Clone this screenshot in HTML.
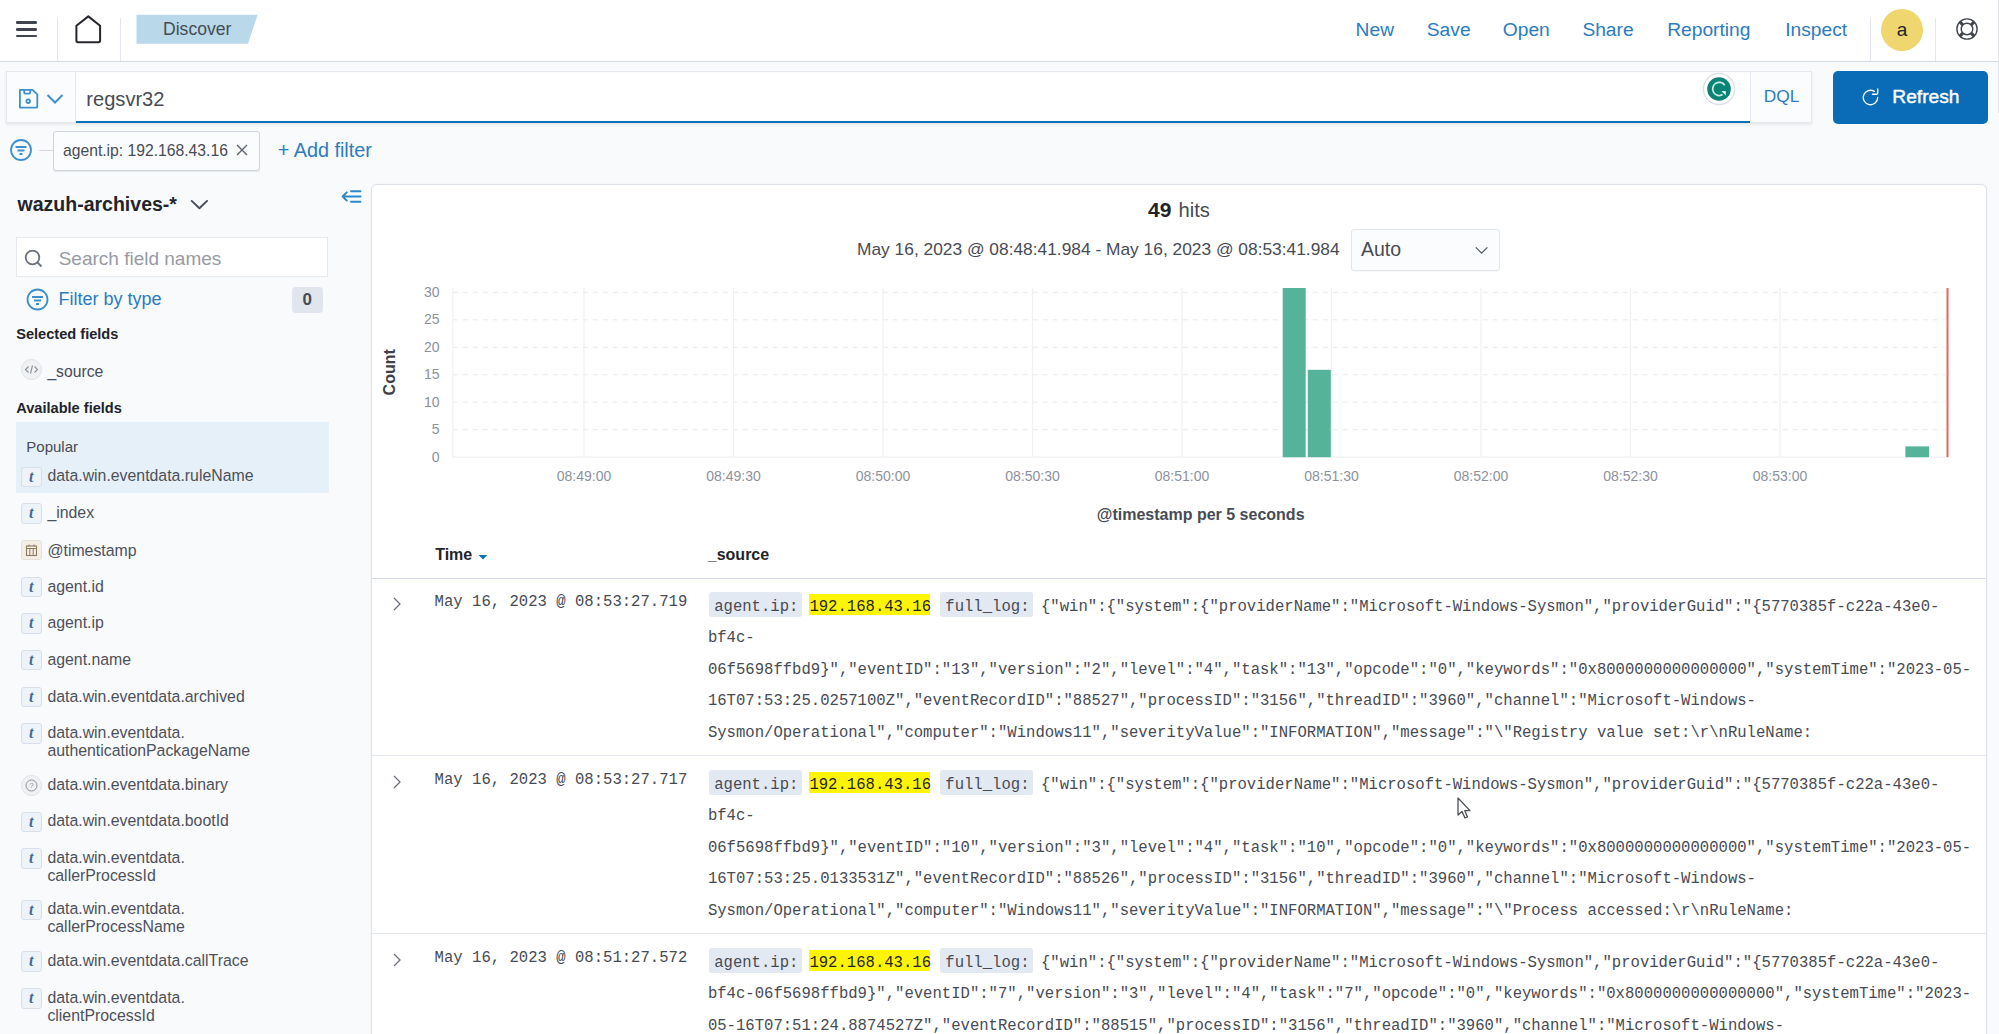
<!DOCTYPE html>
<html><head><meta charset="utf-8"><title>Discover</title>
<style>
html,body{margin:0;padding:0;}
body{width:1999px;height:1034px;overflow:hidden;position:relative;background:#f9fafc;font-family:"Liberation Sans",sans-serif;}
.r{position:absolute;}
.t{position:absolute;line-height:1;white-space:nowrap;}
.s{font-family:"Liberation Sans",sans-serif;}
.m{font-family:"Liberation Mono",monospace;}
.ti{width:20.5px;height:20.5px;border-radius:3px;background:#eef3f9;border:1px solid #d6dfea;box-sizing:border-box;text-align:center;}
.ti span{display:block;font-family:"Liberation Serif",serif;font-style:italic;font-weight:700;font-size:16px;line-height:18.5px;color:#48698f;}
</style></head><body>
<div class="r" style="left:0.0px;top:0.0px;width:1999.0px;height:61.0px;background:#fff"></div>
<div class="r" style="left:0.0px;top:61.0px;width:1999.0px;height:1.0px;background:#d3dae6"></div>
<div class="r" style="left:16.0px;top:21.3px;width:20.8px;height:2.7px;background:#40444d;border-radius:1.3px"></div>
<div class="r" style="left:16.0px;top:27.9px;width:20.8px;height:2.7px;background:#40444d;border-radius:1.3px"></div>
<div class="r" style="left:16.0px;top:34.5px;width:20.8px;height:2.7px;background:#40444d;border-radius:1.3px"></div>
<div class="r" style="left:57.0px;top:18.0px;width:1.0px;height:43.0px;background:#e3e8f0"></div>
<div class="r" style="left:120.0px;top:18.0px;width:1.0px;height:43.0px;background:#e3e8f0"></div>
<svg class="r" style="left:74px;top:14px" width="29" height="31" viewBox="0 0 29 31"><path d="M2.4 11.8 L14.3 2.4 L26.1 11.8 V26.6 Q26.1 28.2 24.5 28.2 H4 Q2.4 28.2 2.4 26.6 Z" fill="none" stroke="#25272c" stroke-width="2" stroke-linejoin="round"/></svg>
<svg class="r" style="left:136px;top:14px" width="124" height="31"><polygon points="0.5,0.7 121.7,0.7 112,29.7 0.5,29.7" fill="#b9d9eb"/></svg>
<div class="t s" style="left:163.0px;top:21.1px;font-size:17.6px;color:#474b54;">Discover</div>
<div class="t s" style="left:1374.8px;top:19.8px;font-size:19.2px;color:#2b7cc1;transform:translateX(-50%);">New</div>
<div class="t s" style="left:1448.7px;top:19.8px;font-size:19.2px;color:#2b7cc1;transform:translateX(-50%);">Save</div>
<div class="t s" style="left:1526.3px;top:19.8px;font-size:19.2px;color:#2b7cc1;transform:translateX(-50%);">Open</div>
<div class="t s" style="left:1608.0px;top:19.8px;font-size:19.2px;color:#2b7cc1;transform:translateX(-50%);">Share</div>
<div class="t s" style="left:1708.8px;top:19.8px;font-size:19.2px;color:#2b7cc1;transform:translateX(-50%);">Reporting</div>
<div class="t s" style="left:1816.2px;top:19.8px;font-size:19.2px;color:#2b7cc1;transform:translateX(-50%);">Inspect</div>
<div class="r" style="left:1870.0px;top:18.0px;width:1.0px;height:43.0px;background:#e3e8f0"></div>
<div class="r" style="left:1935.0px;top:18.0px;width:1.0px;height:43.0px;background:#e3e8f0"></div>
<div class="r" style="left:1881.2px;top:8.5px;width:42px;height:42px;border-radius:50%;background:#f0d66e"></div>
<div class="t s" style="left:1896.8px;top:20.2px;font-size:19px;color:#22242a;">a</div>
<svg class="r" style="left:1954.7px;top:17.3px" width="24" height="24" viewBox="0 0 24 24"><circle cx="12" cy="12" r="10.1" fill="none" stroke="#40444d" stroke-width="1.4"/><circle cx="12" cy="12" r="5.8" fill="none" stroke="#40444d" stroke-width="1.4"/><path d="M7.8 7.8 L4.9 4.9 M16.2 7.8 L19.1 4.9 M7.8 16.2 L4.9 19.1 M16.2 16.2 L19.1 19.1" stroke="#40444d" stroke-width="3.2"/></svg>
<div class="r" style="left:5.5px;top:71.3px;width:1806px;height:52px;background:#fbfcfd;border:1px solid #e3e7ee;box-sizing:border-box;box-shadow:0 2px 3px rgba(0,0,0,0.07)"></div>
<div class="r" style="left:75.5px;top:72.5px;width:1674.5px;height:50.8px;background:#fff"></div>
<div class="r" style="left:75.5px;top:120.6px;width:1674.5px;height:2.8px;background:#0b6fba"></div>
<div class="r" style="left:1750.0px;top:71.5px;width:1.0px;height:51.5px;background:#e3e8f0"></div>
<div class="r" style="left:75.0px;top:71.5px;width:1.0px;height:51.5px;background:#e3e8f0"></div>
<svg class="r" style="left:17px;top:87px" width="24" height="24" viewBox="0 0 24 24"><path d="M3 2.9 H15.5 L20.3 7.3 V19.7 Q20.3 20.7 19.3 20.7 H3 Q2.9 20.7 2.9 19.7 V3.9 Q2.9 2.9 3.9 2.9 Z" fill="none" stroke="#3f8fcf" stroke-width="1.8" stroke-linejoin="round"/><path d="M7.2 2.9 V5.6 Q7.2 6.6 8.2 6.6 H12.2 Q13.2 6.6 13.2 5.6 V2.9" fill="none" stroke="#3f8fcf" stroke-width="1.8"/><circle cx="11.2" cy="14.2" r="1.8" fill="none" stroke="#3f8fcf" stroke-width="1.8"/></svg>
<svg class="r" style="left:46px;top:93px" width="18" height="12" viewBox="0 0 18 12"><path d="M1.5 2 L9 9.5 L16.5 2" fill="none" stroke="#3d8fd1" stroke-width="2"/></svg>
<div class="t s" style="left:86.3px;top:89.4px;font-size:20.1px;color:#474b54;">regsvr32</div>
<svg class="r" style="left:1701px;top:70.5px" width="36" height="36" viewBox="0 0 36 36"><circle cx="18" cy="18" r="15.6" fill="#fff" stroke="#dcdfe6" stroke-width="1.4"/><circle cx="18" cy="18" r="11.8" fill="#0a8474"/><path d="M23.7 14.2 A6.6 6.6 0 1 0 21.6 23.6" fill="none" stroke="#cdece5" stroke-width="1.7"/><path d="M20.3 19.9 H24.8 V24.4 Z" fill="#dff3ee"/></svg>
<div class="t s" style="left:1763.8px;top:88.3px;font-size:17.3px;color:#2b7cc1;">DQL</div>
<div class="r" style="left:1833px;top:71px;width:154.5px;height:52.6px;border-radius:5px;background:#0a6cb6"></div>
<svg class="r" style="left:1860.2px;top:87.2px" width="21" height="21" viewBox="0 0 16 16"><path fill="#fff" d="M11.228 2.942a.5.5 0 1 1-.538.842A5 5 0 1 0 13 8a.5.5 0 1 1 1 0 6 6 0 1 1-2.772-5.058zM14 1.5v3A1.5 1.5 0 0 1 12.5 6h-3a.5.5 0 0 1 0-1h3a.5.5 0 0 0 .5-.5v-3a.5.5 0 1 1 1 0z"/></svg>
<div class="t s" style="left:1892.3px;top:87.4px;font-size:19.2px;color:#fff;-webkit-text-stroke:0.45px #fff;">Refresh</div>
<svg class="r" style="left:9px;top:138px" width="24" height="24" viewBox="0 0 24 24"><circle cx="12" cy="12" r="10" fill="none" stroke="#3d8fd1" stroke-width="1.8"/><path d="M6.5 9 H17.5 M8.5 12.5 H15.5 M10.5 16 H13.5" stroke="#3d8fd1" stroke-width="1.8"/></svg>
<div class="r" style="left:39.0px;top:149.5px;width:14.0px;height:1.0px;background:#d3dae6"></div>
<div class="r" style="left:53px;top:131.2px;width:207px;height:39.5px;border:1px solid #cfd5de;border-radius:3px;background:#fbfcfd;box-sizing:border-box;box-shadow:0 1px 1px rgba(0,0,0,0.08)"></div>
<div class="t s" style="left:63.0px;top:143.3px;font-size:15.7px;color:#474b54;">agent.ip: 192.168.43.16</div>
<svg class="r" style="left:234px;top:142px" width="16" height="16" viewBox="0 0 16 16"><path d="M3 3 L13 13 M13 3 L3 13" stroke="#5d636d" stroke-width="1.4"/></svg>
<div class="t s" style="left:277.8px;top:140.7px;font-size:19.8px;color:#2b7cc1;">+ Add filter</div>
<div class="t s" style="left:17.6px;top:194.5px;font-size:19.5px;color:#22242a;font-weight:700;">wazuh-archives-*</div>
<svg class="r" style="left:190px;top:196px" width="19" height="14" viewBox="0 0 19 14"><path d="M1.7 4.9 L9.4 12.2 L17.1 4.9" fill="none" stroke="#474b54" stroke-width="1.9" stroke-linecap="round" stroke-linejoin="round"/></svg>
<svg class="r" style="left:340px;top:187px" width="23" height="19" viewBox="0 0 23 19"><path d="M6.8 5.3 L2.6 9.5 L6.8 13.7 M2.6 9.5 H20.5 M11 4.2 H20.5 M11 14.7 H20.5" fill="none" stroke="#2f86c9" stroke-width="1.9" stroke-linecap="round" stroke-linejoin="round"/></svg>
<div class="r" style="left:16px;top:237px;width:312px;height:40px;border:1px solid #e6e9f0;background:#fff;box-sizing:border-box"></div>
<svg class="r" style="left:23px;top:248px" width="22" height="22" viewBox="0 0 22 22"><circle cx="9.5" cy="9.5" r="6.8" fill="none" stroke="#69707d" stroke-width="1.8"/><path d="M14.5 14.5 L18.5 18.5" stroke="#69707d" stroke-width="1.8"/></svg>
<div class="t s" style="left:58.7px;top:248.7px;font-size:19px;color:#969ba4;">Search field names</div>
<svg class="r" style="left:24.5px;top:286.5px" width="25" height="25" viewBox="0 0 25 25"><circle cx="12.5" cy="12.5" r="10" fill="none" stroke="#3d8fd1" stroke-width="1.8"/><path d="M7 10 H18 M9 13.5 H16 M11 17 H14" stroke="#3d8fd1" stroke-width="1.8"/></svg>
<div class="t s" style="left:58.5px;top:290.3px;font-size:18.0px;color:#2b7cc1;">Filter by type</div>
<div class="r" style="left:292px;top:287px;width:31px;height:26px;border-radius:4px;background:#e0e5ee"></div>
<div class="t s" style="left:302.5px;top:291.1px;font-size:17px;color:#474b54;font-weight:700;">0</div>
<div class="t s" style="left:16.2px;top:327.2px;font-size:14.6px;color:#22242a;font-weight:700;">Selected fields</div>
<div class="r" style="left:21px;top:358.5px;width:21px;height:21px;border-radius:50%;background:#f0f1f3;border:1px solid #dfe2e6;box-sizing:border-box"></div>
<svg class="r" style="left:21px;top:358.5px" width="21" height="21" viewBox="0 0 21 21"><path d="M7.5 7.5 L4.5 10.5 L7.5 13.5 M13.5 7.5 L16.5 10.5 L13.5 13.5 M11.5 6.5 L9.5 14.5" fill="none" stroke="#8a919c" stroke-width="1.1"/></svg>
<div class="t s" style="left:47.4px;top:363.5px;font-size:15.7px;color:#474b54;">_source</div>
<div class="t s" style="left:16.2px;top:400.8px;font-size:14.6px;color:#22242a;font-weight:700;">Available fields</div>
<div class="r" style="left:15.7px;top:422.0px;width:313.0px;height:70.6px;background:#e6f0f8"></div>
<div class="t s" style="left:26.3px;top:439.3px;font-size:15px;color:#474b54;">Popular</div>
<div class="r ti" style="left:21px;top:466.6px"><span>t</span></div>
<div class="t s" style="left:47.4px;top:467.9px;font-size:15.85px;color:#4d515a;">data.win.eventdata.ruleName</div>
<div class="r ti" style="left:21px;top:503.2px"><span>t</span></div>
<div class="t s" style="left:47.4px;top:505.3px;font-size:15.85px;color:#4d515a;">_index</div>
<div class="r" style="left:21px;top:539.8px;width:20.5px;height:20.5px;border-radius:3px;background:#f4efe6;border:1px solid #e8e0d0;box-sizing:border-box"></div>
<svg class="r" style="left:21px;top:539.8px" width="21" height="21" viewBox="0 0 21 21"><rect x="5.5" y="6" width="10" height="9.5" fill="none" stroke="#8c7b5e" stroke-width="1.1"/><path d="M5.5 8.5 H15.5 M8.8 8.5 V15.5 M12.2 8.5 V15.5 M8 4.5 V6.5 M13 4.5 V6.5" stroke="#8c7b5e" stroke-width="1"/></svg>
<div class="t s" style="left:47.4px;top:542.5px;font-size:15.85px;color:#4d515a;">@timestamp</div>
<div class="r ti" style="left:21px;top:576.5px"><span>t</span></div>
<div class="t s" style="left:47.4px;top:578.9px;font-size:15.85px;color:#4d515a;">agent.id</div>
<div class="r ti" style="left:21px;top:613.1px"><span>t</span></div>
<div class="t s" style="left:47.4px;top:615.4px;font-size:15.85px;color:#4d515a;">agent.ip</div>
<div class="r ti" style="left:21px;top:649.8px"><span>t</span></div>
<div class="t s" style="left:47.4px;top:652.2px;font-size:15.85px;color:#4d515a;">agent.name</div>
<div class="r ti" style="left:21px;top:686.8px"><span>t</span></div>
<div class="t s" style="left:47.4px;top:688.9px;font-size:15.85px;color:#4d515a;">data.win.eventdata.archived</div>
<div class="r ti" style="left:21px;top:723.4px"><span>t</span></div>
<div class="t s" style="left:47.4px;top:725.4px;font-size:15.85px;color:#4d515a;">data.win.eventdata.</div>
<div class="t s" style="left:47.4px;top:743.0px;font-size:15.85px;color:#4d515a;">authenticationPackageName</div>
<div class="r" style="left:21px;top:774.7px;width:21px;height:21px;border-radius:50%;background:#f0f1f3;border:1px solid #dfe2e6;box-sizing:border-box"></div>
<svg class="r" style="left:21px;top:774.7px" width="21" height="21" viewBox="0 0 21 21"><circle cx="10.5" cy="10.5" r="5.5" fill="none" stroke="#8a919c" stroke-width="1"/><text x="10.5" y="13.3" font-size="8" text-anchor="middle" fill="#8a919c" font-family="Liberation Sans">?</text></svg>
<div class="t s" style="left:47.4px;top:776.6px;font-size:15.85px;color:#4d515a;">data.win.eventdata.binary</div>
<div class="r ti" style="left:21px;top:811.6px"><span>t</span></div>
<div class="t s" style="left:47.4px;top:813.2px;font-size:15.85px;color:#4d515a;">data.win.eventdata.bootId</div>
<div class="r ti" style="left:21px;top:848.4px"><span>t</span></div>
<div class="t s" style="left:47.4px;top:850.3px;font-size:15.85px;color:#4d515a;">data.win.eventdata.</div>
<div class="t s" style="left:47.4px;top:867.9px;font-size:15.85px;color:#4d515a;">callerProcessId</div>
<div class="r ti" style="left:21px;top:899.8px"><span>t</span></div>
<div class="t s" style="left:47.4px;top:901.4px;font-size:15.85px;color:#4d515a;">data.win.eventdata.</div>
<div class="t s" style="left:47.4px;top:919.0px;font-size:15.85px;color:#4d515a;">callerProcessName</div>
<div class="r ti" style="left:21px;top:951.2px"><span>t</span></div>
<div class="t s" style="left:47.4px;top:953.1px;font-size:15.85px;color:#4d515a;">data.win.eventdata.callTrace</div>
<div class="r ti" style="left:21px;top:988.3px"><span>t</span></div>
<div class="t s" style="left:47.4px;top:989.9px;font-size:15.85px;color:#4d515a;">data.win.eventdata.</div>
<div class="t s" style="left:47.4px;top:1007.5px;font-size:15.85px;color:#4d515a;">clientProcessId</div>
<div class="r" style="left:371px;top:184px;width:1616px;height:900px;background:#fff;border:1px solid #dde2ea;border-radius:6px;box-sizing:border-box;box-shadow:0 0 2px rgba(0,0,0,0.06)"></div>
<div class="t s" style="left:1148.0px;top:199.0px;font-size:21px;color:#22242a;font-weight:700;">49</div>
<div class="t s" style="left:1178.5px;top:199.7px;font-size:20.2px;color:#474b54;">hits</div>
<div class="t s" style="left:857.0px;top:240.8px;font-size:17.35px;color:#474b54;">May 16, 2023 @ 08:48:41.984 - May 16, 2023 @ 08:53:41.984</div>
<div class="r" style="left:1350.5px;top:229px;width:149.5px;height:41.5px;background:#fbfcfd;border:1px solid #e1e5ee;border-radius:3px;box-sizing:border-box;box-shadow:0 1px 1px rgba(0,0,0,0.03)"></div>
<div class="t s" style="left:1361.0px;top:240.1px;font-size:19.5px;color:#474b54;">Auto</div>
<svg class="r" style="left:1472px;top:243px" width="19" height="14" viewBox="0 0 19 14"><path d="M3.8 4.4 L9.6 10.2 L15.4 4.4" fill="none" stroke="#555b66" stroke-width="1.3"/></svg>
<svg class="r" style="left:0;top:0" width="1999" height="1034"><line x1="452.8" y1="429.7" x2="1945" y2="429.7" stroke="#e6e9ee" stroke-width="1" stroke-dasharray="5 5"/><line x1="452.8" y1="402.2" x2="1945" y2="402.2" stroke="#e6e9ee" stroke-width="1" stroke-dasharray="5 5"/><line x1="452.8" y1="374.8" x2="1945" y2="374.8" stroke="#e6e9ee" stroke-width="1" stroke-dasharray="5 5"/><line x1="452.8" y1="347.3" x2="1945" y2="347.3" stroke="#e6e9ee" stroke-width="1" stroke-dasharray="5 5"/><line x1="452.8" y1="319.8" x2="1945" y2="319.8" stroke="#e6e9ee" stroke-width="1" stroke-dasharray="5 5"/><line x1="452.8" y1="292.3" x2="1945" y2="292.3" stroke="#e6e9ee" stroke-width="1" stroke-dasharray="5 5"/><line x1="584.0" y1="288" x2="584.0" y2="457.2" stroke="#eef0f3" stroke-width="1.2"/><line x1="733.5" y1="288" x2="733.5" y2="457.2" stroke="#eef0f3" stroke-width="1.2"/><line x1="883.0" y1="288" x2="883.0" y2="457.2" stroke="#eef0f3" stroke-width="1.2"/><line x1="1032.5" y1="288" x2="1032.5" y2="457.2" stroke="#eef0f3" stroke-width="1.2"/><line x1="1182.0" y1="288" x2="1182.0" y2="457.2" stroke="#eef0f3" stroke-width="1.2"/><line x1="1331.5" y1="288" x2="1331.5" y2="457.2" stroke="#eef0f3" stroke-width="1.2"/><line x1="1481.0" y1="288" x2="1481.0" y2="457.2" stroke="#eef0f3" stroke-width="1.2"/><line x1="1630.5" y1="288" x2="1630.5" y2="457.2" stroke="#eef0f3" stroke-width="1.2"/><line x1="1780.0" y1="288" x2="1780.0" y2="457.2" stroke="#eef0f3" stroke-width="1.2"/><line x1="452.8" y1="288" x2="452.8" y2="457.2" stroke="#eef0f3" stroke-width="1.2"/><line x1="452.8" y1="457.2" x2="1947" y2="457.2" stroke="#eef0f3" stroke-width="1.2"/><rect x="1282.7" y="288.0" width="23.0" height="169.2" fill="#54b399"/><rect x="1307.8" y="369.8" width="23.0" height="87.4" fill="#54b399"/><rect x="1905.4" y="446.4" width="23.6" height="10.8" fill="#54b399"/><line x1="1947.5" y1="288" x2="1947.5" y2="457.2" stroke="#dc6a5e" stroke-width="2"/><text x="439.6" y="461.8" text-anchor="end" font-size="14" fill="#8c929c" font-family="Liberation Sans">0</text><text x="439.6" y="434.3" text-anchor="end" font-size="14" fill="#8c929c" font-family="Liberation Sans">5</text><text x="439.6" y="406.8" text-anchor="end" font-size="14" fill="#8c929c" font-family="Liberation Sans">10</text><text x="439.6" y="379.4" text-anchor="end" font-size="14" fill="#8c929c" font-family="Liberation Sans">15</text><text x="439.6" y="351.9" text-anchor="end" font-size="14" fill="#8c929c" font-family="Liberation Sans">20</text><text x="439.6" y="324.4" text-anchor="end" font-size="14" fill="#8c929c" font-family="Liberation Sans">25</text><text x="439.6" y="296.9" text-anchor="end" font-size="14" fill="#8c929c" font-family="Liberation Sans">30</text><text x="584.0" y="481" text-anchor="middle" font-size="14" fill="#8c929c" font-family="Liberation Sans">08:49:00</text><text x="733.5" y="481" text-anchor="middle" font-size="14" fill="#8c929c" font-family="Liberation Sans">08:49:30</text><text x="883.0" y="481" text-anchor="middle" font-size="14" fill="#8c929c" font-family="Liberation Sans">08:50:00</text><text x="1032.5" y="481" text-anchor="middle" font-size="14" fill="#8c929c" font-family="Liberation Sans">08:50:30</text><text x="1182.0" y="481" text-anchor="middle" font-size="14" fill="#8c929c" font-family="Liberation Sans">08:51:00</text><text x="1331.5" y="481" text-anchor="middle" font-size="14" fill="#8c929c" font-family="Liberation Sans">08:51:30</text><text x="1481.0" y="481" text-anchor="middle" font-size="14" fill="#8c929c" font-family="Liberation Sans">08:52:00</text><text x="1630.5" y="481" text-anchor="middle" font-size="14" fill="#8c929c" font-family="Liberation Sans">08:52:30</text><text x="1780.0" y="481" text-anchor="middle" font-size="14" fill="#8c929c" font-family="Liberation Sans">08:53:00</text><text transform="translate(394.6 372.3) rotate(-90)" text-anchor="middle" font-size="16" font-weight="700" fill="#3d4149" font-family="Liberation Sans">Count</text><text x="1200.7" y="519.8" text-anchor="middle" font-size="16" font-weight="700" fill="#474b54" font-family="Liberation Sans">@timestamp per 5 seconds</text></svg>
<div class="t s" style="left:435.2px;top:546.5px;font-size:16px;color:#22242a;font-weight:700;">Time</div>
<svg class="r" style="left:477px;top:552px" width="12" height="10" viewBox="0 0 12 10"><path d="M1.6 3 H10.4 L6 7.4 Z" fill="#0b6fba"/></svg>
<div class="t s" style="left:707.8px;top:546.5px;font-size:16px;color:#22242a;font-weight:700;">_source</div>
<div class="r" style="left:372.0px;top:577.5px;width:1614.0px;height:1.0px;background:#d3dae6"></div>
<svg class="r" style="left:390px;top:595px" width="14" height="18" viewBox="0 0 14 18"><path d="M4 3 L10 9 L4 15" fill="none" stroke="#6a707b" stroke-width="1.3"/></svg>
<div class="t m" style="left:434.6px;top:594.6px;font-size:15.6px;color:#474b54;white-space:pre;">May 16, 2023 @ 08:53:27.719</div>
<div class="r" style="left:708.9px;top:591.6px;width:93.5px;height:25.2px;background:#e3e9f2;border-radius:3px"></div>
<div class="t m" style="left:714.2px;top:599.7px;font-size:15.6px;color:#474b54;white-space:pre;">agent.ip:</div>
<div class="r" style="left:808.5px;top:594.2px;width:121.5px;height:21.2px;background:#fff500"></div>
<div class="t m" style="left:809.4px;top:599.7px;font-size:15.6px;color:#22242a;white-space:pre;">192.168.43.16</div>
<div class="r" style="left:939.8px;top:591.6px;width:93.7px;height:25.2px;background:#e3e9f2;border-radius:3px"></div>
<div class="t m" style="left:945.3px;top:599.7px;font-size:15.6px;color:#474b54;white-space:pre;">full_log:</div>
<div class="t m" style="left:1041.0px;top:599.7px;font-size:15.6px;color:#474b54;white-space:pre;">{"win":{"system":{"providerName":"Microsoft-Windows-Sysmon","providerGuid":"{5770385f-c22a-43e0-</div>
<div class="t m" style="left:707.9px;top:631.4px;font-size:15.6px;color:#474b54;white-space:pre;">bf4c-</div>
<div class="t m" style="left:707.9px;top:662.9px;font-size:15.6px;color:#474b54;white-space:pre;">06f5698ffbd9}","eventID":"13","version":"2","level":"4","task":"13","opcode":"0","keywords":"0x8000000000000000","systemTime":"2023-05-</div>
<div class="t m" style="left:707.9px;top:694.3px;font-size:15.6px;color:#474b54;white-space:pre;">16T07:53:25.0257100Z","eventRecordID":"88527","processID":"3156","threadID":"3960","channel":"Microsoft-Windows-</div>
<div class="t m" style="left:707.9px;top:725.8px;font-size:15.6px;color:#474b54;white-space:pre;">Sysmon/Operational","computer":"Windows11","severityValue":"INFORMATION","message":"\"Registry value set:\r\nRuleName:</div>
<div class="r" style="left:372.0px;top:755.0px;width:1614.0px;height:1.0px;background:#e3e8f0"></div>
<svg class="r" style="left:390px;top:773px" width="14" height="18" viewBox="0 0 14 18"><path d="M4 3 L10 9 L4 15" fill="none" stroke="#6a707b" stroke-width="1.3"/></svg>
<div class="t m" style="left:434.6px;top:772.6px;font-size:15.6px;color:#474b54;white-space:pre;">May 16, 2023 @ 08:53:27.717</div>
<div class="r" style="left:708.9px;top:769.6px;width:93.5px;height:25.2px;background:#e3e9f2;border-radius:3px"></div>
<div class="t m" style="left:714.2px;top:777.7px;font-size:15.6px;color:#474b54;white-space:pre;">agent.ip:</div>
<div class="r" style="left:808.5px;top:772.2px;width:121.5px;height:21.2px;background:#fff500"></div>
<div class="t m" style="left:809.4px;top:777.7px;font-size:15.6px;color:#22242a;white-space:pre;">192.168.43.16</div>
<div class="r" style="left:939.8px;top:769.6px;width:93.7px;height:25.2px;background:#e3e9f2;border-radius:3px"></div>
<div class="t m" style="left:945.3px;top:777.7px;font-size:15.6px;color:#474b54;white-space:pre;">full_log:</div>
<div class="t m" style="left:1041.0px;top:777.7px;font-size:15.6px;color:#474b54;white-space:pre;">{"win":{"system":{"providerName":"Microsoft-Windows-Sysmon","providerGuid":"{5770385f-c22a-43e0-</div>
<div class="t m" style="left:707.9px;top:809.4px;font-size:15.6px;color:#474b54;white-space:pre;">bf4c-</div>
<div class="t m" style="left:707.9px;top:840.9px;font-size:15.6px;color:#474b54;white-space:pre;">06f5698ffbd9}","eventID":"10","version":"3","level":"4","task":"10","opcode":"0","keywords":"0x8000000000000000","systemTime":"2023-05-</div>
<div class="t m" style="left:707.9px;top:872.3px;font-size:15.6px;color:#474b54;white-space:pre;">16T07:53:25.0133531Z","eventRecordID":"88526","processID":"3156","threadID":"3960","channel":"Microsoft-Windows-</div>
<div class="t m" style="left:707.9px;top:903.8px;font-size:15.6px;color:#474b54;white-space:pre;">Sysmon/Operational","computer":"Windows11","severityValue":"INFORMATION","message":"\"Process accessed:\r\nRuleName:</div>
<div class="r" style="left:372.0px;top:933.0px;width:1614.0px;height:1.0px;background:#e3e8f0"></div>
<svg class="r" style="left:390px;top:951px" width="14" height="18" viewBox="0 0 14 18"><path d="M4 3 L10 9 L4 15" fill="none" stroke="#6a707b" stroke-width="1.3"/></svg>
<div class="t m" style="left:434.6px;top:950.6px;font-size:15.6px;color:#474b54;white-space:pre;">May 16, 2023 @ 08:51:27.572</div>
<div class="r" style="left:708.9px;top:947.6px;width:93.5px;height:25.2px;background:#e3e9f2;border-radius:3px"></div>
<div class="t m" style="left:714.2px;top:955.7px;font-size:15.6px;color:#474b54;white-space:pre;">agent.ip:</div>
<div class="r" style="left:808.5px;top:950.2px;width:121.5px;height:21.2px;background:#fff500"></div>
<div class="t m" style="left:809.4px;top:955.7px;font-size:15.6px;color:#22242a;white-space:pre;">192.168.43.16</div>
<div class="r" style="left:939.8px;top:947.6px;width:93.7px;height:25.2px;background:#e3e9f2;border-radius:3px"></div>
<div class="t m" style="left:945.3px;top:955.7px;font-size:15.6px;color:#474b54;white-space:pre;">full_log:</div>
<div class="t m" style="left:1041.0px;top:955.7px;font-size:15.6px;color:#474b54;white-space:pre;">{"win":{"system":{"providerName":"Microsoft-Windows-Sysmon","providerGuid":"{5770385f-c22a-43e0-</div>
<div class="t m" style="left:707.9px;top:987.4px;font-size:15.6px;color:#474b54;white-space:pre;">bf4c-06f5698ffbd9}","eventID":"7","version":"3","level":"4","task":"7","opcode":"0","keywords":"0x8000000000000000","systemTime":"2023-</div>
<div class="t m" style="left:707.9px;top:1018.9px;font-size:15.6px;color:#474b54;white-space:pre;">05-16T07:51:24.8874527Z","eventRecordID":"88515","processID":"3156","threadID":"3960","channel":"Microsoft-Windows-</div>
<svg class="r" style="left:1455.5px;top:796.2px" width="18" height="26" viewBox="0 0 18 26"><path d="M2 2 L2 19 L6 15.5 L9 22 L11.5 21 L8.7 14.6 L14 14.6 Z" fill="#fff" stroke="#4d5159" stroke-width="1.3" stroke-linejoin="round"/></svg>
<div class="r" style="left:1997.6px;top:0.0px;width:1.4px;height:113.4px;background:#e3e6eb"></div>
</body></html>
